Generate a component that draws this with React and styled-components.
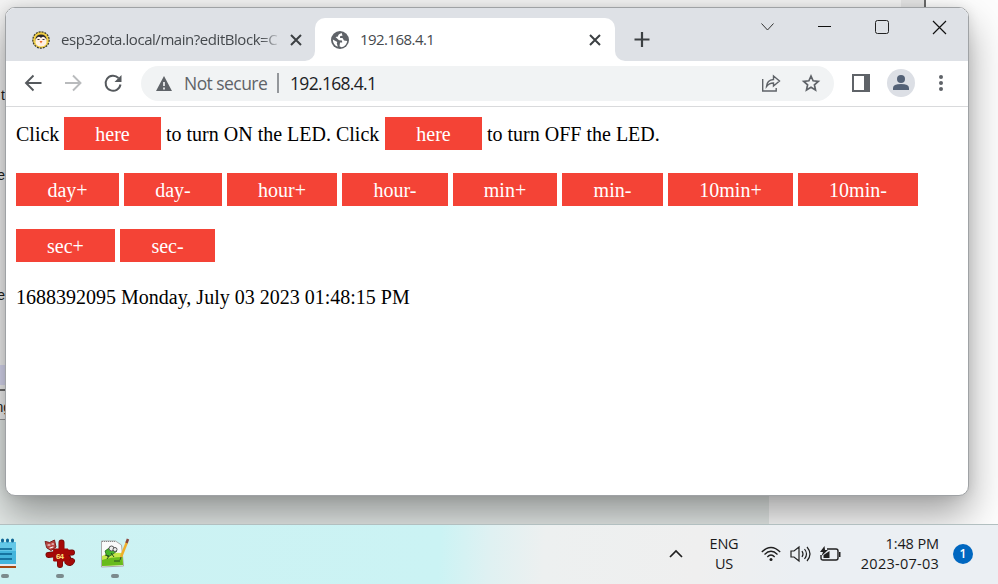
import React from "react";
import styled, { createGlobalStyle } from "styled-components";

const Global = createGlobalStyle`
  * { box-sizing: border-box; }
  body { margin: 0; overflow: hidden; background: #fff; }
`;

const ui = `"Open Sans", "Noto Sans", sans-serif`;

const Screen = styled.div`
  width: 998px;
  height: 584px;
  display: grid;
  grid-template-rows: 524px 60px;
  overflow: hidden;
  font-family: ${ui};
`;

const Desktop = styled.main`
  position: relative;
  overflow: hidden;
  background: #fdfdfd;
`;

const BackWindow = styled.div`
  position: absolute;
  left: 0;
  top: 0;
  width: 926px;
  height: 420px;
  background: linear-gradient(90deg, #f4f4f4 901px, #e6e6e6 901px);
  border-right: 2px solid #6b6b6b;
  border-bottom: 1px solid #999;
`;

const BackFooter = styled.div`
  position: absolute;
  left: 0;
  bottom: 0;
  width: 769px;
  height: 104px;
  background: #e6ebe9;
`;

const BackSelection = styled.div`
  position: absolute;
  left: 0;
  top: 365px;
  width: 6px;
  height: 20px;
  background: #dcdcf4;
`;

const BackRule = styled.div`
  position: absolute;
  left: 0;
  top: 389px;
  width: 6px;
  height: 2px;
  background: #707070;
`;

const BackText = styled.span`
  position: absolute;
  right: ${(p) => 998 - p.$right}px;
  top: ${(p) => p.$top}px;
  font: 14px/18px "Liberation Sans", Arial, sans-serif;
  color: #222;
`;

const Browser = styled.section`
  position: absolute;
  left: 5px;
  top: 7px;
  width: 964px;
  height: 489px;
  display: flex;
  flex-direction: column;
  border: 1px solid #9fa2a5;
  border-radius: 10px;
  overflow: hidden;
  background: #fff;
  box-shadow: 0 19px 38px rgba(0, 0, 0, 0.36), 0 0 12px rgba(0, 0, 0, 0.1);
`;

const TabStrip = styled.header`
  height: 53px;
  flex: none;
  display: flex;
  background: #dee1e6;
`;

const Tab = styled.div`
  width: ${(p) => p.$width}px;
  height: ${(p) => (p.$active ? 43 : 53)}px;
  margin-top: ${(p) => (p.$active ? 10 : 0)}px;
  padding: ${(p) => (p.$active ? "0 15px 0 16px" : "10px 14px 0 26px")};
  display: flex;
  align-items: center;
  gap: 11px;
  border-radius: ${(p) => (p.$active ? "10px 10px 0 0" : "0 0 10px 0")};
  background: ${(p) => (p.$active ? "#fff" : "#dee1e6")};
`;

const TabBacking = styled.div`
  display: flex;
  background: #fff;
`;

const TabTitle = styled.span`
  flex: 1;
  overflow: hidden;
  white-space: nowrap;
  font-size: 15px;
  letter-spacing: ${(p) => p.$spacing}px;
  line-height: 20px;
  padding-bottom: 2px;
  color: #45494d;
  mask-image: ${(p) => (p.$fade ? "linear-gradient(90deg, #000 200px, transparent 221px)" : "none")};
`;

const StripRest = styled.div`
  flex: 1;
  display: flex;
  justify-content: space-between;
  padding-left: 18px;
  border-radius: 0 0 0 10px;
  background: #dee1e6;
`;

const RestBacking = styled.div`
  flex: 1;
  display: flex;
  background: #fff;
`;

const NewTab = styled.div`
  padding-top: 22px;
  height: 40px;
`;

const WindowControls = styled.div`
  display: flex;
  height: 38px;
  align-items: center;
  gap: 44px;
  padding-right: 22px;
`;

const Icon = styled.svg`
  display: block;
  flex: none;
  overflow: visible;
`;

const Toolbar = styled.nav`
  height: 46px;
  flex: none;
  display: flex;
  align-items: center;
  padding: 0 20px 1px 17px;
  border-bottom: 1px solid #d9dadc;
`;

const NavButtons = styled.div`
  display: flex;
  align-items: center;
  gap: 20px;
  width: 118px;
`;

const AddressBar = styled.div`
  width: 693px;
  height: 35px;
  display: flex;
  align-items: center;
  padding: 0 14px 0 15px;
  border-radius: 18px;
  background: #f1f3f4;
  white-space: nowrap;
`;

const Security = styled.span`
  width: 93px;
  margin-left: 12px;
  font-size: 17.5px;
  letter-spacing: -0.55px;
  color: #5f6368;
`;

const Divider = styled.i`
  width: 2px;
  height: 20px;
  background: #94979b;
`;

const Url = styled.span`
  flex: 1;
  margin-left: 11px;
  font-size: 17.5px;
  letter-spacing: -0.68px;
  color: #202124;
`;

const AddressActions = styled.div`
  display: flex;
  align-items: center;
  gap: 21px;
`;

const ToolActions = styled.div`
  margin-left: auto;
  display: flex;
  align-items: center;
  gap: 18px;
`;

const Page = styled.article`
  flex: 1;
  padding: 10px;
  font: 20px/35px "Liberation Serif", "Times New Roman", serif;
  color: #000;
  white-space: nowrap;
`;

const Line = styled.div`
  display: flex;
  gap: 5px;
  height: 33px;
  margin-bottom: 23px;
`;

const RedLink = styled.a`
  width: ${(p) => p.$width}px;
  height: 33px;
  text-align: center;
  color: #fff;
  background: #f44336;
`;

const Phrase = styled.span`
  width: ${(p) => (p.$width ? `${p.$width}px` : "auto")};
`;

const Timestamp = styled.p`
  margin: -5px 0 0;
`;

const Taskbar = styled.footer`
  display: flex;
  justify-content: space-between;
  border-top: 1px solid #b2bfc0;
  background: linear-gradient(93deg, #cdf2f3 0, #cbf3f4 440px, #dff1f2 490px, #edf0f0 545px, #efefef 700px, #ebeff3 800px);
`;

const Apps = styled.div`
  display: flex;
  padding-top: 13px;
  margin-left: -11px;
  gap: 23px;
`;

const AppButton = styled.div`
  width: 32px;
  display: flex;
  flex-direction: column;
  align-items: center;
  gap: 4px;
  &::after {
    content: "";
    width: 8px;
    height: 4px;
    border-radius: 2px;
    background: #7b8b8d;
  }
`;

const Tray = styled.div`
  display: flex;
  align-items: center;
  height: 58px;
  padding-right: 25px;
  color: #1a1a1a;
  font-size: 14.5px;
  line-height: 20px;
`;

const Language = styled.div`
  width: 34px;
  margin: 0 20px 0 24px;
  text-align: center;
  letter-spacing: -0.2px;
`;

const Status = styled.div`
  display: flex;
  align-items: center;
  gap: 9px;
  width: 81px;
`;

const Clock = styled.div`
  width: 97px;
  text-align: right;
  font-size: 14.5px;
`;

const TimeLine = styled.div`
  letter-spacing: ${(p) => p.$spacing}px;
`;

const Badge = styled.b`
  width: 20px;
  height: 20px;
  margin-left: 14px;
  border-radius: 50%;
  text-align: center;
  font-size: 12px;
  font-weight: 600;
  color: #fff;
  background: #0067c0;
`;

const Close = ({ size = 10, width = 2, color = "#3c4043" }) => (
  <Icon width={size} height={size} viewBox="0 0 10 10" stroke={color} strokeWidth={width} fill="none">
    <path d="M0 0 10 10M10 0 0 10" />
  </Icon>
);

const Penguin = () => (
  <Icon width="18" height="18" viewBox="0 0 18 18">
    <circle cx="9" cy="9" r="8.200" fill="#f1cf45" stroke="#3b3a2c" strokeWidth="1.200" strokeDasharray="2 1" />
    <path d="M3.500 8Q4 3.500 9 3.500t5.500 4.500l-1 3H4z" fill="#29272a" />
    <path d="M3.500 8.500Q6.300 4 9 7q2.700-3 5.500 1.500.8 7-5.500 7T3.500 8.500z" fill="#fff0e4" />
    <path d="M5.500 8.500h2M10.500 8.500h2" stroke="#333" />
    <path d="m7.500 10 3 0-1.500 2.500z" fill="#ef6d28" />
  </Icon>
);

const Globe = () => (
  <Icon width="18" height="18" viewBox="0 0 18 18">
    <circle cx="9" cy="9" r="9" fill="#5f6368" />
    <path d="M10.700 2Q6.800 3.200 7 5.500L4.500 6 8 9.200l3 .3.200 2H9l-.5 3.800 2 1Q15.700 15 16.200 10L13 9.500 11.500 7H9l.2-2 2.300-.2zM1.800 8.500 6.300 11l-.5 1.300 1 3.500Q2 14 1.800 8.500z" fill="#fff" />
  </Icon>
);

const Notepad = () => (
  <Icon width="32" height="32" viewBox="0 0 32 32">
    <path d="M0 4h27v22H0z" fill="#43b5dc" />
    <path d="M0 4h27v9H0z" fill="#63c8e8" />
    <path d="M0 26h27v2H0z" fill="#e8e8ed" />
    <path d="M0 28h27v2H0z" fill="#a74a13" />
    <path d="M4 11h19M4 16h19M4 21h19" stroke="#075f8c" strokeWidth="1.700" />
    <path d="M8.500 2v1M13.500 2v1M18.500 2v1M23.500 2v1" stroke="#0f6695" strokeWidth="3" strokeLinecap="round" />
  </Icon>
);

const Creature = () => (
  <Icon width="32" height="32" viewBox="0 0 32 32" strokeLinecap="round" strokeLinejoin="round">
    <g fill="none" stroke="#6f0d0b" strokeWidth="6">
      <path d="M17.500 4.500v12M4.500 17l12-1.500L28 14.500M16 16v11M18 17l6 3M23.500 24q2.500 2.500 4.500-1" />
    </g>
    <path d="M10 11h14v12H10z" fill="#a50907" stroke="#a50907" />
    <g fill="none" stroke="#a50907" strokeWidth="4.600">
      <path d="M17.500 4.500v12M4.500 17l12-1.500L28 14.500M16 16v11M18 17l6 3" />
      <path d="M23.500 24q2.500 2.500 4.500-1" />
    </g>
    <path d="m1.500 3.500 4 1L10.500 2l1.500 7-5 3.500L3 10z" fill="#b94541" stroke="#7b1d1a" />
    <path d="M4 7h2M8 6h1.500M6 10l3-1" stroke="#fff" strokeWidth="1.100" />
    <text x="12" y="21" fontFamily="Liberation Sans, sans-serif" fontWeight="bold" fontSize="8" textLength="8" fill="#ffe57c">64</text>
  </Icon>
);

const NotepadPlus = () => (
  <Icon width="32" height="32" viewBox="0 0 32 32">
    <path d="m2.500 3 14 0 6 4 2 21-22 1z" fill="#fafafa" stroke="#aaa" />
    <path d="M3 18q9-4 20-3l1 12-21 1z" fill="#c6e64b" />
    <path d="M3 22q9-3 20.500-3l.5 8-21 1z" fill="#68bb1c" />
    <path d="M6 13q4-4 8-3l4 3-4 3-5 3-2-3z" fill="#46b52a" stroke="#28631e" strokeWidth=".8" />
    <path d="m6 17 4 1-2 3M12 15l3 4M15 23l6 0" fill="none" stroke="#244c20" />
    <circle cx="12.500" cy="10.500" r="2.500" fill="#eee" stroke="#555" />
    <circle cx="16" cy="11.500" r="2" fill="#eee" stroke="#555" />
    <path d="M3 3.500h13" stroke="#888" strokeDasharray="1 1" />
    <path d="M28 4 22 19" stroke="#efae2c" strokeWidth="2.500" />
    <path d="m29 1-1.500 4" stroke="#8b453d" strokeWidth="2.500" />
    <path d="m22 19-1 3" stroke="#4e4434" />
  </Icon>
);

const times = [
  ["day+", 103], ["day-", 98], ["hour+", 110], ["hour-", 106],
  ["min+", 104], ["min-", 101], ["10min+", 125], ["10min-", 120],
];

export default function App() {
  return (
    <Screen>
      <Global />
      <Desktop>
        <BackWindow />
        <BackFooter />
        <BackSelection />
        <BackRule />
        <BackText $right={5} $top={86}>t</BackText>
        <BackText $right={5} $top={166}>e</BackText>
        <BackText $right={5} $top={286}>e</BackText>
        <BackText $right={11} $top={398}>ng</BackText>
        <Browser>
          <TabStrip>
            <TabBacking>
              <Tab $width={309}>
                <Penguin />
                <TabTitle $fade $spacing={-0.45}>esp32ota.local/main?editBlock=C</TabTitle>
                <Close />
              </Tab>
            </TabBacking>
            <Tab $active $width={300}>
              <Globe />
              <TabTitle $spacing={-0.55}>192.168.4.1</TabTitle>
              <Close />
            </Tab>
            <RestBacking>
              <StripRest>
                <NewTab>
                  <Icon width="18" height="18" viewBox="0 0 18 18" stroke="#3c4043" strokeWidth="2.200">
                    <path d="M9 2v15M1.500 9.500h15" />
                  </Icon>
                </NewTab>
                <WindowControls>
                  <Icon width="13" height="8" viewBox="0 0 13 8" fill="none" stroke="#333"><path d="m.5.500 6 6.500 6-6.500" /></Icon>
                  <Icon width="13" height="2" viewBox="0 0 13 2"><path d="M0 0h13v1H0z" fill="#111" /></Icon>
                  <Icon width="14" height="14" viewBox="0 0 14 14" fill="none" stroke="#222"><rect x=".5" y=".5" width="13" height="13" rx="2" /></Icon>
                  <Close size={13} width={0.9} color="#111" />
                </WindowControls>
              </StripRest>
            </RestBacking>
          </TabStrip>
          <Toolbar>
            <NavButtons>
              <Icon width="20" height="18" viewBox="0 0 20 18" fill="none" stroke="#55595d" strokeWidth="1.900"><path d="M18.500 9H3M10.500 1.500 3 9l7.500 7.500" /></Icon>
              <Icon width="20" height="18" viewBox="0 0 20 18" fill="none" stroke="#b9bbbd" strokeWidth="1.900"><path d="M2 9h15.500M10 1.500 17.500 9 10 16.500" /></Icon>
              <Icon width="20" height="18" viewBox="0 0 20 18" fill="none" stroke="#55595d" strokeWidth="2"><path d="M17.500 10.500A7.500 7.500 0 1 1 15.500 4" /><path d="M18.500 1v7h-7z" fill="#55595d" stroke="none" /></Icon>
            </NavButtons>
            <AddressBar>
              <Icon width="16" height="15" viewBox="0 0 16 15"><path d="M8 0 16 15H0z" fill="#5f6368" /><path d="M8 6v4M8 11.500v2" stroke="#f1f3f4" strokeWidth="1.700" /></Icon>
              <Security>Not secure</Security>
              <Divider />
              <Url>192.168.4.1</Url>
              <AddressActions>
                <Icon width="20" height="18" viewBox="0 0 20 18" fill="none" stroke="#5f6368" strokeWidth="1.400"><path d="M1.700 5v12h13.500v-3M5.500 12.500Q6 6 12.500 5.500V2L18.500 7l-6 5V9Q8 9 5.500 12.500z" /></Icon>
                <Icon width="18" height="18" viewBox="0 0 18 18" fill="none" stroke="#5f6368" strokeWidth="1.700"><path d="m9 2 2.100 4.800 5.200.5-3.900 3.500 1.100 5.100L9 13.200l-4.500 2.700 1.100-5.100-3.900-3.500 5.200-.5z" /></Icon>
              </AddressActions>
            </AddressBar>
            <ToolActions>
              <Icon width="18" height="18" viewBox="0 0 18 18"><rect x="1" y="1" width="16" height="16" fill="#fff" stroke="#5f6368" strokeWidth="2" /><path d="M12 0h6v18h-6z" fill="#5f6368" /></Icon>
              <Icon width="28" height="28" viewBox="0 0 28 28"><circle cx="13" cy="14" r="14" fill="#dcdfe5" /><circle cx="13" cy="10" r="4" fill="#536176" /><path d="M5 21v-2q0-4 8-4t8 4v2z" fill="#536176" /></Icon>
              <Icon width="14" height="18" viewBox="0 0 14 18" fill="#5f6368"><circle cx="7" cy="3" r="2" /><circle cx="7" cy="9" r="2" /><circle cx="7" cy="15" r="2" /></Icon>
            </ToolActions>
          </Toolbar>
          <Page>
            <Line>
              <Phrase $width={43}>Click</Phrase>
              <RedLink $width={97}>here</RedLink>
              <Phrase $width={214}>to turn ON the LED. Click</Phrase>
              <RedLink $width={97}>here</RedLink>
              <Phrase>to turn OFF the LED.</Phrase>
            </Line>
            <Line>{times.map(([name, width]) => <RedLink key={name} $width={width}>{name}</RedLink>)}</Line>
            <Line><RedLink $width={99}>sec+</RedLink><RedLink $width={95}>sec-</RedLink></Line>
            <Timestamp>1688392095 Monday, July 03 2023 01:48:15 PM</Timestamp>
          </Page>
        </Browser>
      </Desktop>
      <Taskbar>
        <Apps>
          <AppButton><Notepad /></AppButton>
          <AppButton><Creature /></AppButton>
          <AppButton><NotepadPlus /></AppButton>
        </Apps>
        <Tray>
          <Icon width="14" height="8" viewBox="0 0 14 8" fill="none" stroke="#202020" strokeWidth="1.700"><path d="m1 7 6-6 6 6" /></Icon>
          <Language>ENG<br />US</Language>
          <Status>
            <Icon width="20" height="16" viewBox="0 0 20 16" fill="none" stroke="#202020" strokeWidth="1.300"><path d="M.8 6Q10-3 19.200 6M3.500 8.500Q10 2 16.500 8.500M6.300 11Q10 7 13.700 11" /><circle cx="10" cy="13.500" r="1.500" fill="#202020" stroke="none" /></Icon>
            <Icon width="21" height="18" viewBox="0 0 21 18" fill="none" stroke="#202020" strokeWidth="1.200"><path d="M1 6h3l5-4v14l-5-4H1zM12 6q2 3 0 6M14.500 4q4 5 0 10M17 2q6 7 0 14" /></Icon>
            <Icon width="21" height="16" viewBox="0 0 21 16"><path d="M7 3h9q2 0 2 2v7q0 2-2 2H3q-2 0-2-2V9" fill="none" stroke="#202020" strokeWidth="1.400" /><path d="M19 6h1.500v5H19zM3.500 12V9l6-4v7zM4.500 0 0 6h3L1.500 10 8 4H5z" fill="#202020" /></Icon>
          </Status>
          <Clock>
            <TimeLine $spacing={-0.1}>1:48 PM</TimeLine>
            <TimeLine $spacing={0.25}>2023-07-03</TimeLine>
          </Clock>
          <Badge>1</Badge>
        </Tray>
      </Taskbar>
    </Screen>
  );
}
